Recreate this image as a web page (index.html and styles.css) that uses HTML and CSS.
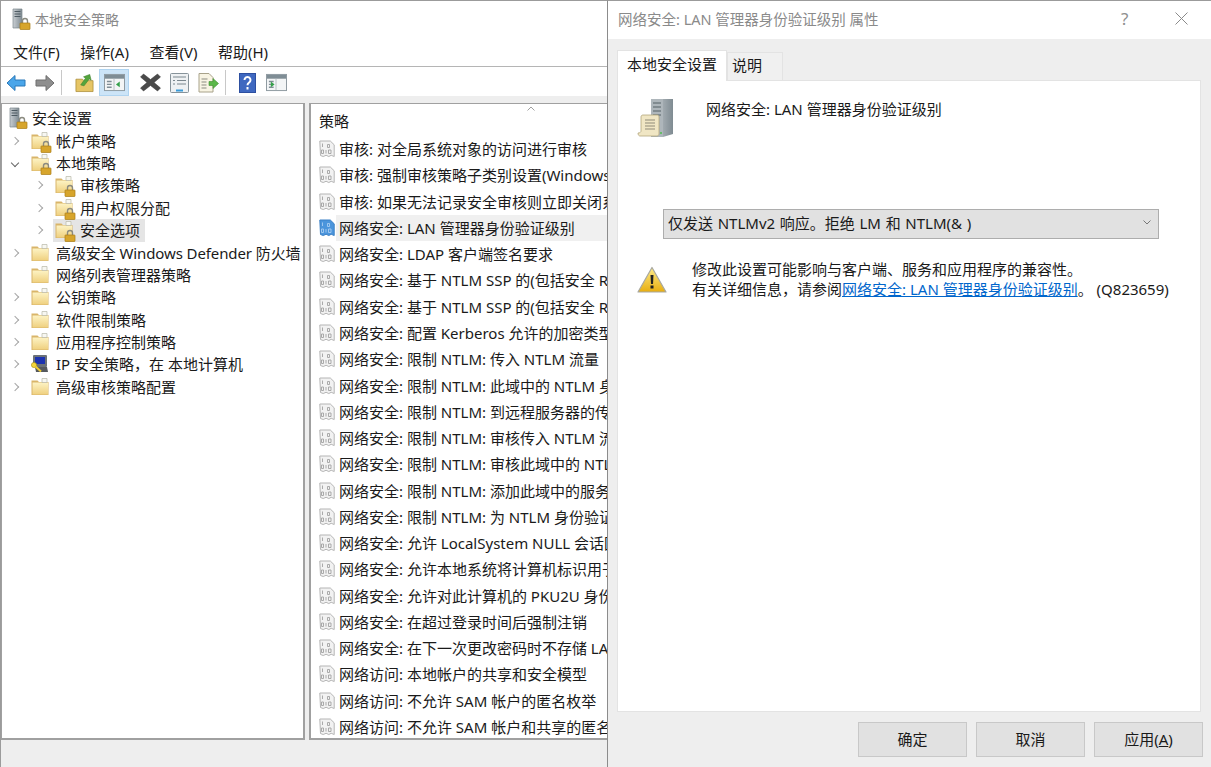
FILE: index.html
```html
<!DOCTYPE html>
<html lang="zh-CN">
<head>
    <meta charset="UTF-8">
    <title>本地安全策略</title>
    <link rel="stylesheet" href="styles.css">
</head>
<body>
    <svg class="defs" width="0" height="0">
        <defs>
            <linearGradient id="folderFill" x1="0" y1="0" x2="0" y2="1">
                <stop offset="0" stop-color="#fdf3c4"/>
                <stop offset="1" stop-color="#efd07f"/>
            </linearGradient>
            <linearGradient id="serverFill" x1="0" y1="0" x2="1" y2="0">
                <stop offset="0" stop-color="#c9ced2"/>
                <stop offset="1" stop-color="#7f8b92"/>
            </linearGradient>
            <linearGradient id="warnFill" x1="0" y1="0" x2="0" y2="1">
                <stop offset="0" stop-color="#fdeb8a"/>
                <stop offset="1" stop-color="#e8ae10"/>
            </linearGradient>
            <symbol id="folder" viewBox="0 0 20 20">
                <path d="M1.5 3.5h6l1.5 1.500h9.500v13h-17z" fill="#d9b56a"/>
                <path d="M2.500 5.500h15.500v12h-15.500z" fill="url(#folderFill)"/>
                <path d="M12 1.500h5v4h-5z" fill="#f7f7f2" stroke="#b8b8a8" stroke-width=".7"/>
            </symbol>
            <symbol id="lock" viewBox="0 0 12 13">
                <path d="M3.500 6V4a2.500 2.500 0 0 1 5 0v2" fill="none" stroke="#8b8b80" stroke-width="1.400"/>
                <rect x="1" y="6" width="10" height="6.500" rx=".6" fill="#d7a52c" stroke="#a97c14" stroke-width=".7"/>
            </symbol>
            <symbol id="policy" viewBox="0 0 16 18">
                <path d="M.8 1h10.500l3.900 3.800v11.700l-3-1.200-2.400 1.200-2.700-1.200-2.900 1.200-2.700-1z" fill="#f2f2f2" stroke="#b4b4b4"/>
                <path d="M3.500 3.500v3.500M8.500 4.500h2v3h-2zM2.500 10h2v3.500h-2zM7 10v3.500M9.500 10h2.500v3.500h-2.500z" fill="none" stroke="#a2a2a2" stroke-width=".9"/>
            </symbol>
            <symbol id="policyActive" viewBox="0 0 16 18">
                <path d="M.8 1h10.500l3.900 3.800v11.700l-3-1.200-2.400 1.200-2.700-1.200-2.900 1.200-2.700-1z" fill="#4b95dc" stroke="#3b80c6"/>
                <path d="M3.500 3.500v3.500M8.500 4.500h2v3h-2zM2.500 10h2v3.500h-2zM7 10v3.500M9.500 10h2.500v3.500h-2.500z" fill="none" stroke="#a9cdf0" stroke-width=".9"/>
            </symbol>
            <symbol id="serverlock" viewBox="0 0 20 22">
                <path d="M2 1h9v19H2z" fill="url(#serverFill)" stroke="#7d868c" stroke-width=".7"/>
                <path d="M3.500 3.500h6M3.500 6h6M3.500 8.500h6" stroke="#4e5b63" stroke-width="1"/>
                <use href="#lock" x="8" y="9" width="12" height="13"/>
            </symbol>
            <symbol id="pane" viewBox="0 0 22 20">
                <rect x=".5" y="1.500" width="21" height="17" fill="#f3f5f6" stroke="#8b979e"/>
                <rect x="1" y="2" width="20" height="4" fill="#7f8d95"/>
                <path d="M3 9h5M3 12h5M3 15h5" stroke="#7f8d95" stroke-width="1.500"/>
                <path d="M10.500 6v12" stroke="#b5bec3"/>
            </symbol>
        </defs>
    </svg>

    <div class="window">
        <div class="titlebar">
            <svg class="title-icon"><use href="#serverlock"/></svg>
            <span>本地安全策略</span>
        </div>
        <div class="menubar">
            <span class="menu-item">文件(F)</span>
            <span class="menu-item">操作(A)</span>
            <span class="menu-item">查看(V)</span>
            <span class="menu-item">帮助(H)</span>
        </div>
        <div class="toolbar">
            <svg class="tool tool-back" viewBox="0 0 20 18"><path d="M9 1.500 1 9l8 7.500V12h10V6H9z" fill="#4aa6ea" stroke="#2a78b8"/></svg>
            <svg class="tool tool-forward" viewBox="0 0 20 18"><path d="M11 1.500 19 9l-8 7.500V12H1V6h10z" fill="#8e8e8e" stroke="#6e6e6e"/></svg>
            <span class="tool-sep"></span>
            <svg class="tool tool-up" viewBox="0 0 20 20"><path d="M1 6h7l1.500 1.500H19V19H1z" fill="#e6c565" stroke="#a98b35" stroke-width=".8"/><path d="M6 12 11 5 9 3.500 15.500 1 17 7l-2-1.300L9.500 13z" fill="#54a53d" stroke="#3d7f2b" stroke-width=".6"/></svg>
            <span class="tool-active">
                <svg class="tool-pane" viewBox="0 0 22 20">
                    <use href="#pane"/>
                    <path d="M16.500 9v6l-4-3z" fill="#35a04a"/>
                </svg>
            </span>
            <svg class="tool tool-delete" viewBox="0 0 21 19"><path d="M3.500 1 10.500 6.500 17.500 1 20.500 4 14 9.500 20.500 15 17.500 18 10.500 12.500 3.500 18 .5 15 7 9.500.5 4z" fill="#4a4a4a" stroke="#333" stroke-width=".5"/></svg>
            <svg class="tool tool-props" viewBox="0 0 19 20"><rect x=".5" y=".5" width="18" height="19" rx="1" fill="#eef1f3" stroke="#87939a"/><path d="M3 4h13M3 7.500h2M7 7.500h9M3 11h2M7 11h9" stroke="#7b878e"/><path d="M6 17.500h7" stroke="#3a9bd8" stroke-width="2"/></svg>
            <svg class="tool tool-export" viewBox="0 0 21 20"><path d="M1 .5h10l4 4V19H1z" fill="#f8f4e3" stroke="#a8a28a"/><path d="M3.500 6h6M3.500 9h5M3.500 12h5M3.500 15h5" stroke="#8b8b80"/><path d="M11 8.500h4V5.500l5.500 5-5.500 5v-3h-4z" fill="#5cb84a" stroke="#3f8f2f" stroke-width=".6"/></svg>
            <span class="tool-sep"></span>
            <svg class="tool tool-help" viewBox="0 0 17 20"><rect width="17" height="20" fill="#2d4fa0"/><rect x="1" y="1" width="15" height="18" fill="#3f68c0"/><path d="M5.500 7a3 3 0 1 1 4.500 2.600c-1 .6-1.500 1.200-1.500 2.600" fill="none" stroke="#fff" stroke-width="2"/><rect x="7.500" y="14" width="2" height="2.500" fill="#fff"/></svg>
            <svg class="tool tool-showpane" viewBox="0 0 22 20">
                <use href="#pane"/>
                <path d="M5 9v6l4-3z" fill="#35a04a"/>
            </svg>
        </div>

        <div class="panes">
            <div class="tree">
                <div class="tree-row tree-root">
                    <svg class="tree-root-icon"><use href="#serverlock"/></svg>
                    <span>安全设置</span>
                </div>
                <div class="tree-row">
                    <span class="chevron"></span>
                    <span class="tree-icon"><svg class="folder"><use href="#folder"/></svg><svg class="lock"><use href="#lock"/></svg></span>
                    <span>帐户策略</span>
                </div>
                <div class="tree-row">
                    <span class="chevron open"></span>
                    <span class="tree-icon"><svg class="folder"><use href="#folder"/></svg><svg class="lock"><use href="#lock"/></svg></span>
                    <span>本地策略</span>
                </div>
                <div class="tree-row level2">
                    <span class="chevron"></span>
                    <span class="tree-icon"><svg class="folder"><use href="#folder"/></svg><svg class="lock"><use href="#lock"/></svg></span>
                    <span>审核策略</span>
                </div>
                <div class="tree-row level2">
                    <span class="chevron"></span>
                    <span class="tree-icon"><svg class="folder"><use href="#folder"/></svg><svg class="lock"><use href="#lock"/></svg></span>
                    <span>用户权限分配</span>
                </div>
                <div class="tree-row level2">
                    <span class="chevron"></span>
                    <span class="selected">
                        <span class="tree-icon"><svg class="folder"><use href="#folder"/></svg><svg class="lock"><use href="#lock"/></svg></span>
                        <span>安全选项</span>
                    </span>
                </div>
                <div class="tree-row">
                    <span class="chevron"></span>
                    <span class="tree-icon"><svg class="folder"><use href="#folder"/></svg></span>
                    <span class="tight">高级安全 Windows Defender 防火墙</span>
                </div>
                <div class="tree-row">
                    <span class="chevron none"></span>
                    <span class="tree-icon"><svg class="folder"><use href="#folder"/></svg></span>
                    <span>网络列表管理器策略</span>
                </div>
                <div class="tree-row">
                    <span class="chevron"></span>
                    <span class="tree-icon"><svg class="folder"><use href="#folder"/></svg></span>
                    <span>公钥策略</span>
                </div>
                <div class="tree-row">
                    <span class="chevron"></span>
                    <span class="tree-icon"><svg class="folder"><use href="#folder"/></svg></span>
                    <span>软件限制策略</span>
                </div>
                <div class="tree-row">
                    <span class="chevron"></span>
                    <span class="tree-icon"><svg class="folder"><use href="#folder"/></svg></span>
                    <span>应用程序控制策略</span>
                </div>
                <div class="tree-row">
                    <span class="chevron"></span>
                    <span class="tree-icon">
                        <svg class="folder" viewBox="0 0 20 20">
                            <rect x="3" y="1" width="14" height="12" rx="1" fill="#6b7278"/>
                            <rect x="5" y="3" width="10" height="7" fill="#1c33b0"/>
                            <path d="M5 13h12l1 5H6z" fill="#55595e"/>
                            <circle cx="4" cy="11" r="2.600" fill="#f4d53a" stroke="#a58c12" stroke-width=".6"/>
                            <path d="M5.500 12.500 11 17.500" stroke="#f0cc30" stroke-width="2"/>
                        </svg>
                    </span>
                    <span>IP 安全策略，在 本地计算机</span>
                </div>
                <div class="tree-row">
                    <span class="chevron"></span>
                    <span class="tree-icon"><svg class="folder"><use href="#folder"/></svg></span>
                    <span>高级审核策略配置</span>
                </div>
            </div>

            <div class="list">
                <div class="list-header">
                    <span>策略</span>
                    <svg class="sort-arrow" viewBox="0 0 8 5"><path d="M.5 4.500 4 1l3.500 3.500" fill="none" stroke="#a0a0a0"/></svg>
                </div>
                <div class="list-row"><svg class="row-icon"><use href="#policy"/></svg><span>审核: 对全局系统对象的访问进行审核</span></div>
                <div class="list-row"><svg class="row-icon"><use href="#policy"/></svg><span>审核: 强制审核策略子类别设置(Windows Vista 或更高版本)以替代审核策略类别设置</span></div>
                <div class="list-row"><svg class="row-icon"><use href="#policy"/></svg><span>审核: 如果无法记录安全审核则立即关闭系统</span></div>
                <div class="list-row hover"><svg class="row-icon"><use href="#policyActive"/></svg><span class="row-text">网络安全: LAN 管理器身份验证级别</span></div>
                <div class="list-row"><svg class="row-icon"><use href="#policy"/></svg><span>网络安全: LDAP 客户端签名要求</span></div>
                <div class="list-row"><svg class="row-icon"><use href="#policy"/></svg><span>网络安全: 基于 NTLM SSP 的(包括安全 RPC)客户端的最小会话安全</span></div>
                <div class="list-row"><svg class="row-icon"><use href="#policy"/></svg><span>网络安全: 基于 NTLM SSP 的(包括安全 RPC)服务器的最小会话安全</span></div>
                <div class="list-row"><svg class="row-icon"><use href="#policy"/></svg><span>网络安全: 配置 Kerberos 允许的加密类型</span></div>
                <div class="list-row"><svg class="row-icon"><use href="#policy"/></svg><span>网络安全: 限制 NTLM: 传入 NTLM 流量</span></div>
                <div class="list-row"><svg class="row-icon"><use href="#policy"/></svg><span>网络安全: 限制 NTLM: 此域中的 NTLM 身份验证</span></div>
                <div class="list-row"><svg class="row-icon"><use href="#policy"/></svg><span>网络安全: 限制 NTLM: 到远程服务器的传出 NTLM 流量</span></div>
                <div class="list-row"><svg class="row-icon"><use href="#policy"/></svg><span>网络安全: 限制 NTLM: 审核传入 NTLM 流量</span></div>
                <div class="list-row"><svg class="row-icon"><use href="#policy"/></svg><span>网络安全: 限制 NTLM: 审核此域中的 NTLM 身份验证</span></div>
                <div class="list-row"><svg class="row-icon"><use href="#policy"/></svg><span>网络安全: 限制 NTLM: 添加此域中的服务器例外</span></div>
                <div class="list-row"><svg class="row-icon"><use href="#policy"/></svg><span>网络安全: 限制 NTLM: 为 NTLM 身份验证添加远程服务器例外</span></div>
                <div class="list-row"><svg class="row-icon"><use href="#policy"/></svg><span>网络安全: 允许 LocalSystem NULL 会话回退</span></div>
                <div class="list-row"><svg class="row-icon"><use href="#policy"/></svg><span>网络安全: 允许本地系统将计算机标识用于 NTLM</span></div>
                <div class="list-row"><svg class="row-icon"><use href="#policy"/></svg><span>网络安全: 允许对此计算机的 PKU2U 身份验证请求使用联机标识</span></div>
                <div class="list-row"><svg class="row-icon"><use href="#policy"/></svg><span>网络安全: 在超过登录时间后强制注销</span></div>
                <div class="list-row"><svg class="row-icon"><use href="#policy"/></svg><span>网络安全: 在下一次更改密码时不存储 LAN 管理器哈希值</span></div>
                <div class="list-row"><svg class="row-icon"><use href="#policy"/></svg><span>网络访问: 本地帐户的共享和安全模型</span></div>
                <div class="list-row"><svg class="row-icon"><use href="#policy"/></svg><span>网络访问: 不允许 SAM 帐户的匿名枚举</span></div>
                <div class="list-row"><svg class="row-icon"><use href="#policy"/></svg><span>网络访问: 不允许 SAM 帐户和共享的匿名枚举</span></div>
            </div>
        </div>
    </div>

    <div class="dialog">
        <div class="dialog-title">
            <span class="dialog-title-text">网络安全: LAN 管理器身份验证级别 属性</span>
            <span class="dialog-help">?</span>
            <svg class="dialog-close" viewBox="0 0 13 13"><path d="M.5.5l12 12M12.500.5l-12 12" stroke="#8a8a8a" fill="none"/></svg>
        </div>
        <div class="tabs">
            <span class="tab active">本地安全设置</span>
            <span class="tab tab-second">说明</span>
        </div>
        <div class="tab-panel">
            <div class="policy-head">
                <svg class="server-icon" viewBox="0 0 37 40">
                    <path d="M14 1h22v35l-10 3H14z" fill="url(#serverFill)"/>
                    <path d="M14 1h12v38H14z" fill="#aeb6bb"/>
                    <path d="M16 5h8M16 9h8M16 13h8M16 17h8" stroke="#737d83" stroke-width="1.500"/>
                    <path d="M1 35c2 0 3-1 3-2V19c0-1.500 1-2 2-2h14c1 0 2 .5 2 2v17c0 1-1 2-2 2H3c-1 0-2-1-2-3z" fill="#f0e6c4" stroke="#b3a67c" stroke-width=".8"/>
                    <path d="M8 22h10M8 25h10M8 28h10M8 31h10" stroke="#8f8a78"/>
                    <circle cx="24" cy="35" r="1" fill="#4fbf4f"/>
                </svg>
                <span>网络安全: LAN 管理器身份验证级别</span>
            </div>
            <div class="select">
                <span>仅发送 NTLMv2 响应。拒绝 LM 和 NTLM(&amp; )</span>
                <svg class="select-arrow" viewBox="0 0 8 5"><path d="M.5.5 4 4 7.500.5" fill="none" stroke="#777"/></svg>
            </div>
            <div class="warning">
                <svg class="warn-icon" viewBox="0 0 30 28">
                    <path d="M15 1.500 29 26H1z" fill="url(#warnFill)" stroke="#a8a8a0" stroke-width="1.200" stroke-linejoin="round"/>
                    <path d="M13.500 9h3l-.5 9h-2z" fill="#222"/>
                    <rect x="13.500" y="19.500" width="3" height="3" fill="#222"/>
                </svg>
                <div class="warning-text">
                    <div class="warning-line">修改此设置可能影响与客户端、服务和应用程序的兼容性。</div>
                    <div class="warning-line">有关详细信息，请参阅<a href="#">网络安全: LAN 管理器身份验证级别</a>。 (Q823659)</div>
                </div>
            </div>
        </div>
        <div class="dialog-buttons">
            <button>确定</button>
            <button>取消</button>
            <button>应用(<u>A</u>)</button>
        </div>
    </div>
</body>
</html>
```

FILE: styles.css
```css
* {
    box-sizing: border-box;
}
html, body {
    margin: 0;
    height: 100%;
}
body {
    position: relative;
    width: 1211px;
    height: 767px;
    overflow: hidden;
    font-family: "Noto Sans", "Noto Sans CJK SC", sans-serif;
    font-size: 15px;
    color: #1a1a1a;
    background: #eeeeee;
}
.defs {
    position: absolute;
}
.window {
    display: flex;
    flex-direction: column;
    height: 767px;
    border-top: 1px solid #9b9b9b;
    border-left: 1px solid #9b9b9b;
}
.titlebar {
    display: flex;
    align-items: center;
    height: 38px;
    padding: 0 0 3px 10px;
    background: white;
    color: #8a8a8a;
    font-size: 14px;
}
.title-icon {
    width: 20px;
    height: 22px;
    margin-right: 4px;
}
.menubar {
    display: flex;
    align-items: center;
    height: 28px;
    padding: 0 0 2px 12px;
    gap: 20.5px;
    background: white;
    border-bottom: 1px solid #b5b5b5;
    font-size: 15px;
    line-height: 26px;
}
.menu-item {
    white-space: nowrap;
}
.toolbar {
    display: flex;
    align-items: center;
    height: 29px;
    padding: 2px 0 0 5px;
    background: white;
}
.tool {
    display: block;
}
.tool-back {
    width: 20px;
    height: 18px;
}
.tool-forward {
    width: 20px;
    height: 18px;
    margin-left: 9px;
}
.tool-sep {
    width: 1px;
    height: 25px;
    margin: 0 13px 0 6px;
    background: #c8c8c8;
}
.tool-up {
    width: 19px;
    height: 20px;
}
.tool-active {
    display: flex;
    align-items: center;
    justify-content: center;
    width: 30px;
    height: 27px;
    margin-left: 5px;
    background: #cce4f7;
    border: 1px solid #b0d4f0;
}
.tool-pane {
    width: 21px;
    height: 19px;
}
.tool-delete {
    width: 21px;
    height: 19px;
    margin-left: 11px;
}
.tool-props {
    width: 19px;
    height: 20px;
    margin-left: 9px;
}
.tool-export {
    width: 21px;
    height: 20px;
    margin-left: 9px;
}
.tool-help {
    width: 17px;
    height: 20px;
}
.tool-showpane {
    width: 21px;
    height: 19px;
    margin-left: 10px;
}
.panes {
    display: flex;
    flex: none;
    gap: 4px;
    height: 637px;
    margin-top: 7px;
}
.tree {
    flex: none;
    width: 304px;
    padding-top: 3px;
    background: white;
    border: 2px solid #a0a0a0;
    border-width: 1px 2px 2px 1px;
    overflow: hidden;
}
.tree-row {
    display: flex;
    align-items: center;
    height: 22.4px;
    white-space: nowrap;
    line-height: 22px;
}
.tree-root {
    padding-left: 6px;
}
.tree-root-icon {
    width: 20px;
    height: 22px;
    margin-right: 4px;
}
.chevron {
    flex: none;
    width: 6px;
    height: 6px;
    margin: 0 12px 0 10px;
    border-top: 1px solid #a6a6a6;
    border-right: 1px solid #a6a6a6;
    transform: rotate(45deg);
}
.chevron.open {
    border-color: #666;
    transform: rotate(135deg);
}
.chevron.none {
    visibility: hidden;
}
.level2 {
    padding-left: 24px;
}
.tree-icon {
    position: relative;
    flex: none;
    width: 22px;
    height: 20px;
    margin-right: 4px;
}
.folder {
    display: block;
    width: 20px;
    height: 20px;
}
.lock {
    position: absolute;
    right: 0;
    bottom: -2px;
    width: 12px;
    height: 13px;
}
.tight {
    letter-spacing: -0.1px;
}
.selected {
    display: flex;
    align-items: center;
    height: 23px;
    padding-right: 5px;
    margin-left: -1px;
    padding-left: 1px;
    background: #e5e5e5;
}
.list {
    flex: none;
    width: 700px;
    background: white;
    border: 1px solid #a0a0a0;
    border-bottom-width: 2px;
    border-left-width: 2px;
    overflow: hidden;
}
.list-header {
    position: relative;
    height: 32px;
    padding: 6px 0 0 8px;
    line-height: 22px;
}
.sort-arrow {
    position: absolute;
    left: 216px;
    top: 2px;
    width: 8px;
    height: 5px;
}
.list-row {
    display: flex;
    align-items: center;
    height: 26.27px;
    padding-left: 8px;
    white-space: nowrap;
    line-height: 22px;
}
.row-icon {
    flex: none;
    width: 16px;
    height: 18px;
    margin-right: 4px;
}
.row-text {
    align-self: stretch;
    flex: 1;
    margin-left: -3px;
    padding: 2px 0 0 3px;
    background: #f0f0f0;
}
.dialog {
    position: absolute;
    left: 607px;
    top: 0;
    display: flex;
    flex-direction: column;
    width: 604px;
    height: 767px;
    background: #eeeeee;
    border-top: 1px solid #9b9b9b;
    border-left: 1px solid #8c8c8c;
}
.dialog-title {
    display: flex;
    align-items: center;
    height: 38px;
    padding: 0 0 3px 10px;
    background: white;
    color: #8a8a8a;
}
.dialog-title-text {
    flex: 1;
    font-size: 14.5px;
}
.dialog-help {
    width: 54px;
    color: #8f8f8f;
    font-size: 17px;
}
.dialog-close {
    width: 13px;
    height: 13px;
    margin-right: 23px;
}
.tabs {
    display: flex;
    align-items: flex-end;
    height: 41px;
    padding-left: 9px;
}
.tab {
    height: 28px;
    padding: 0 10px;
    line-height: 25px;
    background: #f0f0f0;
    border: 1px solid #e3e3e3;
    border-bottom: none;
}
.tab-second {
    width: 56px;
    padding: 0 0 0 4px;
}
.tab.active {
    height: 31px;
    margin-bottom: -1px;
    padding: 0 9px;
    position: relative;
    line-height: 26px;
    background: white;
}
.tab-panel {
    height: 632px;
    margin: 0 10px 0 9px;
    padding: 17px 0 0 19px;
    background: white;
    border: 1px solid #e3e3e3;
}
.policy-head {
    display: flex;
    align-items: flex-start;
    height: 111px;
    line-height: 22px;
}
.server-icon {
    flex: none;
    width: 37px;
    height: 40px;
    margin-right: 32px;
}
.select {
    display: flex;
    align-items: center;
    justify-content: space-between;
    width: 496px;
    height: 30px;
    margin-left: 26px;
    padding: 0 7px 3px 4px;
    background: #e1e1e1;
    border: 1px solid #adadad;
    word-spacing: 0.8px;
}
.select-arrow {
    width: 8px;
    height: 5px;
}
.warning {
    display: flex;
    margin-top: 21px;
}
.warn-icon {
    flex: none;
    width: 30px;
    height: 28px;
    margin: 6px 25px 0 0;
}
.warning-line {
    height: 19.5px;
    line-height: 19.5px;
    white-space: nowrap;
}
.warning a {
    color: #0066cc;
}
.dialog-buttons {
    display: flex;
    justify-content: flex-end;
    gap: 9px;
    padding: 10px 8px 0 0;
}
button {
    width: 109px;
    height: 35px;
    padding: 0 0 2px;
    font: inherit;
    color: #1a1a1a;
    background: #e1e1e1;
    border: 1px solid #c8c8c8;
}
```
